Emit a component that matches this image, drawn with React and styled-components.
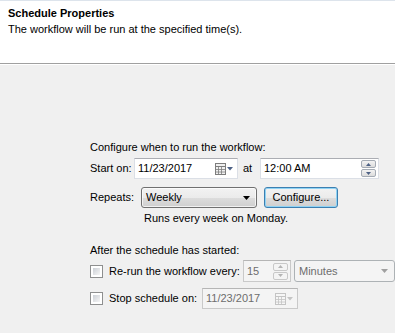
import React from "react";
import styled, { createGlobalStyle, css } from "styled-components";

const Global = createGlobalStyle`
  html, body { margin: 0; padding: 0; background: #f0f0f0; }
  body { font-family: "Liberation Sans", Arial, sans-serif; font-size: 11px; color: #000; }
  #root { width: 395px; height: 333px; overflow: hidden; }
`;

const Page = styled.div`
  width: 395px;
  height: 333px;
  display: flex;
  flex-direction: column;
  background: #f0f0f0;
`;

const Header = styled.div`
  height: 64px;
  background: #fff;
  border-top: 1px solid #dde4ec;
  border-bottom: 1px solid #a0a0a0;
  box-shadow: 0 1px 0 #fff;
  padding: 6px 0 0 8px;
  box-sizing: border-box;
  flex: none;
`;

const Title = styled.div`
  font-weight: bold;
  line-height: 13px;
`;

const Subtitle = styled.div`
  line-height: 13px;
  margin-top: 3px;
`;

const Body = styled.div`
  flex: 1;
  padding: 77px 0 0 90px;
  display: flex;
  flex-direction: column;
`;

const Text = styled.div`
  line-height: 13px;
  white-space: nowrap;
  margin-top: ${p => p.$mt || 0}px;
  padding-left: ${p => p.$pl || 0}px;
`;

const Row = styled.div`
  display: flex;
  align-items: center;
  height: ${p => p.$h || 21}px;
  margin-top: ${p => p.$mt || 0}px;
`;

const Label = styled.span`
  width: ${p => p.$w}px;
  margin-left: ${p => p.$ml || 0}px;
  flex: none;
  white-space: nowrap;
  line-height: 13px;
`;

const Field = styled.div`
  width: ${p => p.$w}px;
  height: ${p => p.$h || 21}px;
  flex: none;
  box-sizing: border-box;
  display: flex;
  align-items: center;
  border: 1px solid #dbdfe6;
  border-top-color: #abadb3;
  background: #fff;
  color: #000;
  padding: 0 2px;
  ${p =>
    p.$disabled &&
    css`
      border-color: #c9c9c9;
      border-top-color: #b5b5b5;
      background: #f4f4f4;
      color: #6d6d6d;
    `}
`;

const FieldText = styled.span`
  flex: 1;
  line-height: 13px;
  white-space: nowrap;
  padding-left: 1px;
`;

const Combo = styled.div`
  width: ${p => p.$w}px;
  height: ${p => p.$h || 21}px;
  flex: none;
  box-sizing: border-box;
  display: flex;
  align-items: center;
  border-radius: 3px;
  margin-left: ${p => p.$ml || 0}px;
  padding: 0 6px 0 3px;
  ${p =>
    p.$disabled
      ? css`
          border: 1px solid #adb2b5;
          background: #f4f4f4;
          color: #6d6d6d;
        `
      : css`
          border: 1px solid #707070;
          background: linear-gradient(#f2f2f2 0%, #ebebeb 50%, #dddddd 50%, #cfcfcf 100%);
          box-shadow: inset 0 0 0 1px rgba(255, 255, 255, 0.7);
        `}
`;

const Button = styled.div`
  width: ${p => p.$w}px;
  height: 21px;
  flex: none;
  box-sizing: border-box;
  display: flex;
  align-items: center;
  justify-content: center;
  margin-left: ${p => p.$ml || 0}px;
  border: 1px solid #3c7fb1;
  border-radius: 3px;
  background: linear-gradient(#f2f2f2 0%, #ebebeb 50%, #dddddd 50%, #cfcfcf 100%);
  box-shadow: inset 0 0 0 1px #8fd3f4;
  line-height: 13px;
`;

const Check = styled.div`
  width: 13px;
  height: 13px;
  box-sizing: border-box;
  flex: none;
  border: 1px solid #8e8f8f;
  background: #fff;
  padding: 2px;
  margin-right: 6px;
  &::after {
    content: "";
    display: block;
    width: 100%;
    height: 100%;
    background: linear-gradient(135deg, #cbcfd5, #f6f6f6);
  }
`;

const Spinner = styled.div`
  width: 15px;
  height: 17px;
  flex: none;
  display: flex;
  flex-direction: column;
  gap: 1px;
`;

const SpinBtn = styled.div`
  flex: 1;
  box-sizing: border-box;
  border: 1px solid ${p => (p.$disabled ? "#c8c8c8" : "#a4abb4")};
  border-radius: 2px;
  background: ${p => (p.$disabled ? "#f4f4f4" : "linear-gradient(#f3f3f3, #dcdcdc)")};
  display: flex;
  align-items: center;
  justify-content: center;
`;

const Arrow = ({ up, color = "#4d6185" }) => (
  <svg width="5" height="3" viewBox="0 0 5 3">
    <path d={up ? "M2.5 0 L5 3 L0 3 Z" : "M0 0 L5 0 L2.5 3 Z"} fill={color} />
  </svg>
);

const DropArrow = ({ color = "#000", w = 7, h = 4 }) => (
  <svg width={w} height={h} viewBox={`0 0 ${w} ${h}`} style={{ flex: "none" }}>
    <path d={`M0 0 L${w} 0 L${w / 2} ${h} Z`} fill={color} />
  </svg>
);

const CalIcon = ({ disabled }) => {
  const c = disabled ? "#c4c4c4" : "#7d7d7d";
  const f = disabled ? "#f6f6f6" : "#f0f0f0";
  return (
    <svg width="20" height="12" viewBox="0 0 20 12" style={{ flex: "none" }}>
      <rect x="0.5" y="0.5" width="10" height="11" fill={f} stroke={c} />
      <line x1="0.5" y1="3.5" x2="10.5" y2="3.5" stroke={c} />
      <line x1="3.5" y1="3.5" x2="3.5" y2="11.5" stroke={c} strokeWidth="0.8" />
      <line x1="6.5" y1="3.5" x2="6.5" y2="11.5" stroke={c} strokeWidth="0.8" />
      <line x1="0.5" y1="6.5" x2="10.5" y2="6.5" stroke={c} strokeWidth="0.8" />
      <line x1="0.5" y1="9" x2="10.5" y2="9" stroke={c} strokeWidth="0.8" />
      <path d="M12 4 L18 4 L15 7.5 Z" fill={disabled ? "#c4c4c4" : "#4d6185"} />
    </svg>
  );
};

const Spin = ({ disabled }) => (
  <Spinner>
    <SpinBtn $disabled={disabled}>
      <Arrow up color={disabled ? "#b4b4b4" : "#4d6185"} />
    </SpinBtn>
    <SpinBtn $disabled={disabled}>
      <Arrow color={disabled ? "#b4b4b4" : "#4d6185"} />
    </SpinBtn>
  </Spinner>
);

export default function App() {
  return (
    <Page>
      <Global />
      <Header>
        <Title>Schedule Properties</Title>
        <Subtitle>The workflow will be run at the specified time(s).</Subtitle>
      </Header>
      <Body>
        <Text>Configure when to run the workflow:</Text>
        <Row $mt={4}>
          <Label $w={44}>Start on:</Label>
          <Field $w={104}>
            <FieldText>11/23/2017</FieldText>
            <CalIcon />
          </Field>
          <Label $w={17} $ml={5}>at</Label>
          <Field $w={119}>
            <FieldText>12:00 AM</FieldText>
            <Spin />
          </Field>
        </Row>
        <Row $mt={8}>
          <Label $w={51}>Repeats:</Label>
          <Combo $w={116}>
            <FieldText>Weekly</FieldText>
            <DropArrow />
          </Combo>
          <Button $w={74} $ml={7}>Configure...</Button>
        </Row>
        <Text $mt={4} $pl={54}>Runs every week on Monday.</Text>
        <Text $mt={19}>After the schedule has started:</Text>
        <Row $mt={3} $h={22}>
          <Check />
          <Label $w={134}>Re-run the workflow every:</Label>
          <Field $w={48} $h={22} $disabled>
            <FieldText>15</FieldText>
            <Spin disabled />
          </Field>
          <Combo $w={101} $h={22} $ml={3} $disabled>
            <FieldText>Minutes</FieldText>
            <DropArrow color="#a0a0a0" />
          </Combo>
        </Row>
        <Row $mt={6}>
          <Check />
          <Label $w={93}>Stop schedule on:</Label>
          <Field $w={96} $disabled>
            <FieldText>11/23/2017</FieldText>
            <CalIcon disabled />
          </Field>
        </Row>
      </Body>
    </Page>
  );
}
